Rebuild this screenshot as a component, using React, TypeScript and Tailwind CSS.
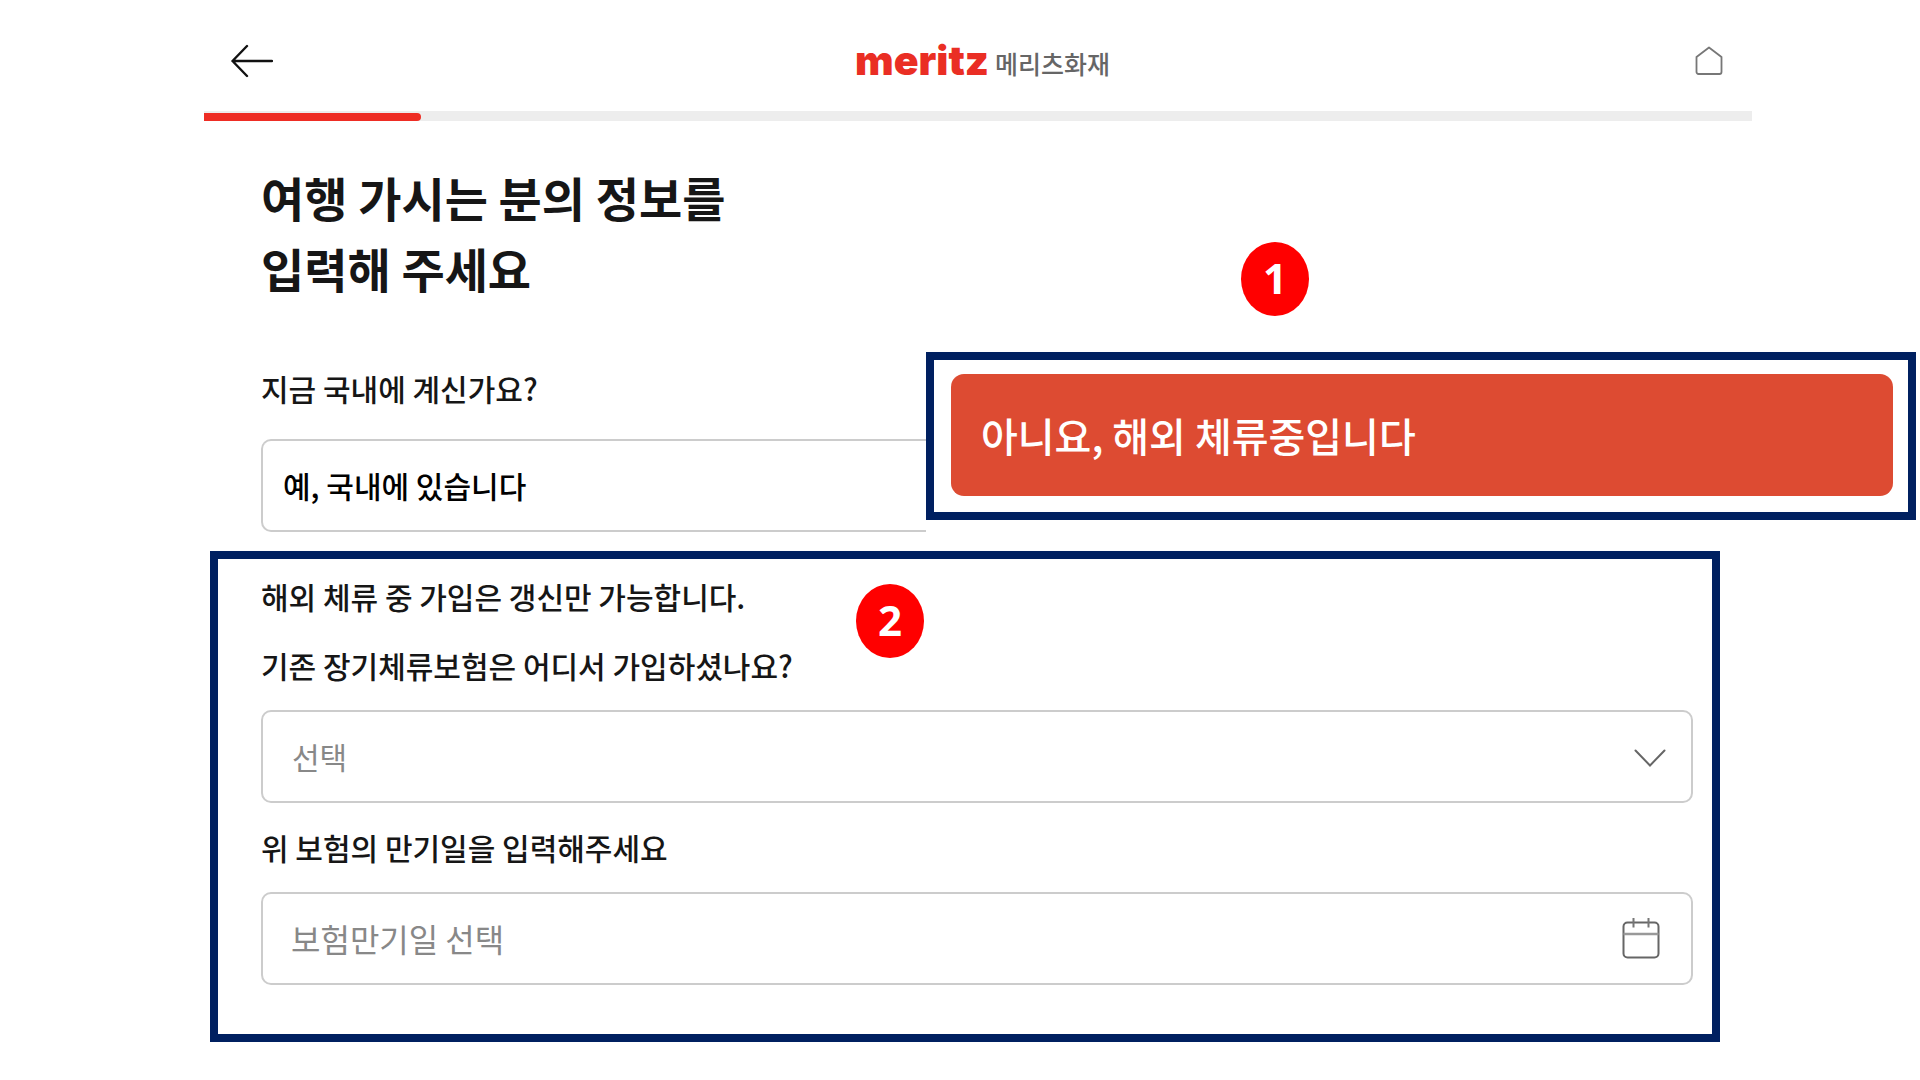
import { ReactNode, useState } from "react";

interface StepBadgeProps {
    number: number,
    className: string
}

interface FieldLabelProps {
    htmlFor: string,
    children: ReactNode
}

function StepBadge({ number, className }: StepBadgeProps) {
    return (
        <span className={`absolute flex h-[74px] w-[68px] items-center justify-center rounded-[50%] bg-[#ff0000] pb-0.5 font-['Noto_Sans',sans-serif] text-[42px] leading-none font-bold text-white ${className}`}>
            {number}
        </span>
    )
}

function FieldLabel({ htmlFor, children }: FieldLabelProps) {
    return (
        <label htmlFor={htmlFor} className="block text-[30px] leading-10 font-medium">
            {children}
        </label>
    )
}

function Header() {
    return (
        <header className="grid h-[111px] grid-cols-[1fr_auto_1fr] items-center pt-2.5 pr-7 pl-[27px]">
            <button type="button" aria-label="뒤로" className="justify-self-start">
                <svg width="42" height="34" viewBox="0 0 42 34" fill="none" stroke="#111" strokeWidth="2.4" strokeLinecap="round" strokeLinejoin="round">
                    <path d="M16 2 1.5 17 16 32M1.5 17H41"/>
                </svg>
            </button>
            <a href="#" className="ml-2.5 flex items-center gap-1.5">
                <span className="font-['Inter',sans-serif] text-[41px] leading-none font-black text-[#ea2e24]">meritz</span>
                <span className="pt-1.5 text-[25px] leading-none font-medium text-[#666]">메리츠화재</span>
            </a>
            <button type="button" aria-label="홈" className="justify-self-end">
                <svg width="30" height="30" viewBox="0 0 30 30" fill="none" stroke="#777" strokeWidth="1.8" strokeLinejoin="round">
                    <path d="M15 1.5 27.5 11V26a2 2 0 0 1-2 2h-21a2 2 0 0 1-2-2V11Z"/>
                </svg>
            </button>
        </header>
    )
}

export default function App() {
    const [company, setCompany] = useState("")
    const [expiryDate, setExpiryDate] = useState("")

    return (
        <div className="relative min-h-screen bg-white pr-[168px] pl-[204px] font-['Noto_Sans_CJK_KR',sans-serif] text-[#161616]">
            <Header/>

            <div className="flex h-[10px] items-end bg-[#ededed]">
                <div className="h-2 w-[14%] rounded-r-full bg-[#ee2d24]"/>
            </div>

            <main>
                <div className="pt-10 pl-[57px]">
                    <h1 className="text-[47px] leading-[71px] font-bold">
                        여행 가시는 분의 정보를<br/>입력해 주세요
                    </h1>
                    <div className="mt-[65px]">
                        <FieldLabel htmlFor="domestic">지금 국내에 계신가요?</FieldLabel>
                    </div>
                    <button id="domestic" type="button" className="mt-[31px] h-[93px] w-[665px] rounded-l-[10px] border-2 border-r-0 border-[#ccc] pl-5 text-left text-[30px] font-medium text-black">
                        예, 국내에 있습니다
                    </button>
                </div>

                <section className="relative mt-[19px] mr-8 ml-1.5 border-8 border-[#002060] pt-[17px] pr-[19px] pb-[49px] pl-[43px]">
                    <StepBadge number={2} className="top-[25px] left-[638px]"/>
                    <p className="text-[30px] leading-10 font-medium">해외 체류 중 가입은 갱신만 가능합니다.</p>
                    <div className="mt-[29px]">
                        <FieldLabel htmlFor="company">기존 장기체류보험은 어디서 가입하셨나요?</FieldLabel>
                    </div>
                    <div className="relative mt-[25px]">
                        <select id="company" value={company} onChange={(event) => setCompany(event.target.value)} className="block h-[93px] w-full appearance-none rounded-[10px] border-2 border-[#ccc] bg-white px-[29px] text-[30px] text-[#888]">
                            <option value="">선택</option>
                        </select>
                        <svg className="pointer-events-none absolute top-9 right-[27px]" width="32" height="22" viewBox="0 0 32 22" fill="none" stroke="#666" strokeWidth="2" strokeLinecap="round">
                            <path d="M1.5 4.5 16 19.5 30.5 4.5"/>
                        </svg>
                    </div>
                    <div className="mt-6">
                        <FieldLabel htmlFor="expiry">위 보험의 만기일을 입력해주세요</FieldLabel>
                    </div>
                    <div className="mt-[25px] flex h-[93px] items-center rounded-[10px] border-2 border-[#ccc] pr-[31px] pb-0.5 pl-7">
                        <input id="expiry" type="text" placeholder="보험만기일 선택" value={expiryDate} onChange={(event) => setExpiryDate(event.target.value)} className="min-w-0 flex-1 text-[32px] outline-none placeholder:text-[#888]"/>
                        <button type="button" aria-label="달력 열기">
                            <svg width="38" height="42" viewBox="0 0 38 42" fill="none" stroke="#666" strokeWidth="2">
                                <rect x="1.5" y="5.5" width="35" height="35" rx="4"/>
                                <path d="M1.5 17h35" stroke="#999" strokeWidth="2.6"/>
                                <path d="M11.5 1v9.5M26.5 1v9.5" stroke="#777"/>
                            </svg>
                        </button>
                    </div>
                </section>
            </main>

            {/* callout for the other answer, laid over the first field */}
            <StepBadge number={1} className="top-[242px] left-[1241px]"/>
            <div className="absolute top-[352px] right-1 left-[926px] border-8 border-[#002060] bg-white pt-3.5 pr-[15px] pb-4 pl-[17px]">
                <button type="button" className="block h-[122px] w-full rounded-[13px] bg-[#dd4b32] pl-[30px] text-left text-[40px] font-medium text-white">
                    아니요, 해외 체류중입니다
                </button>
            </div>
        </div>
    )
}
